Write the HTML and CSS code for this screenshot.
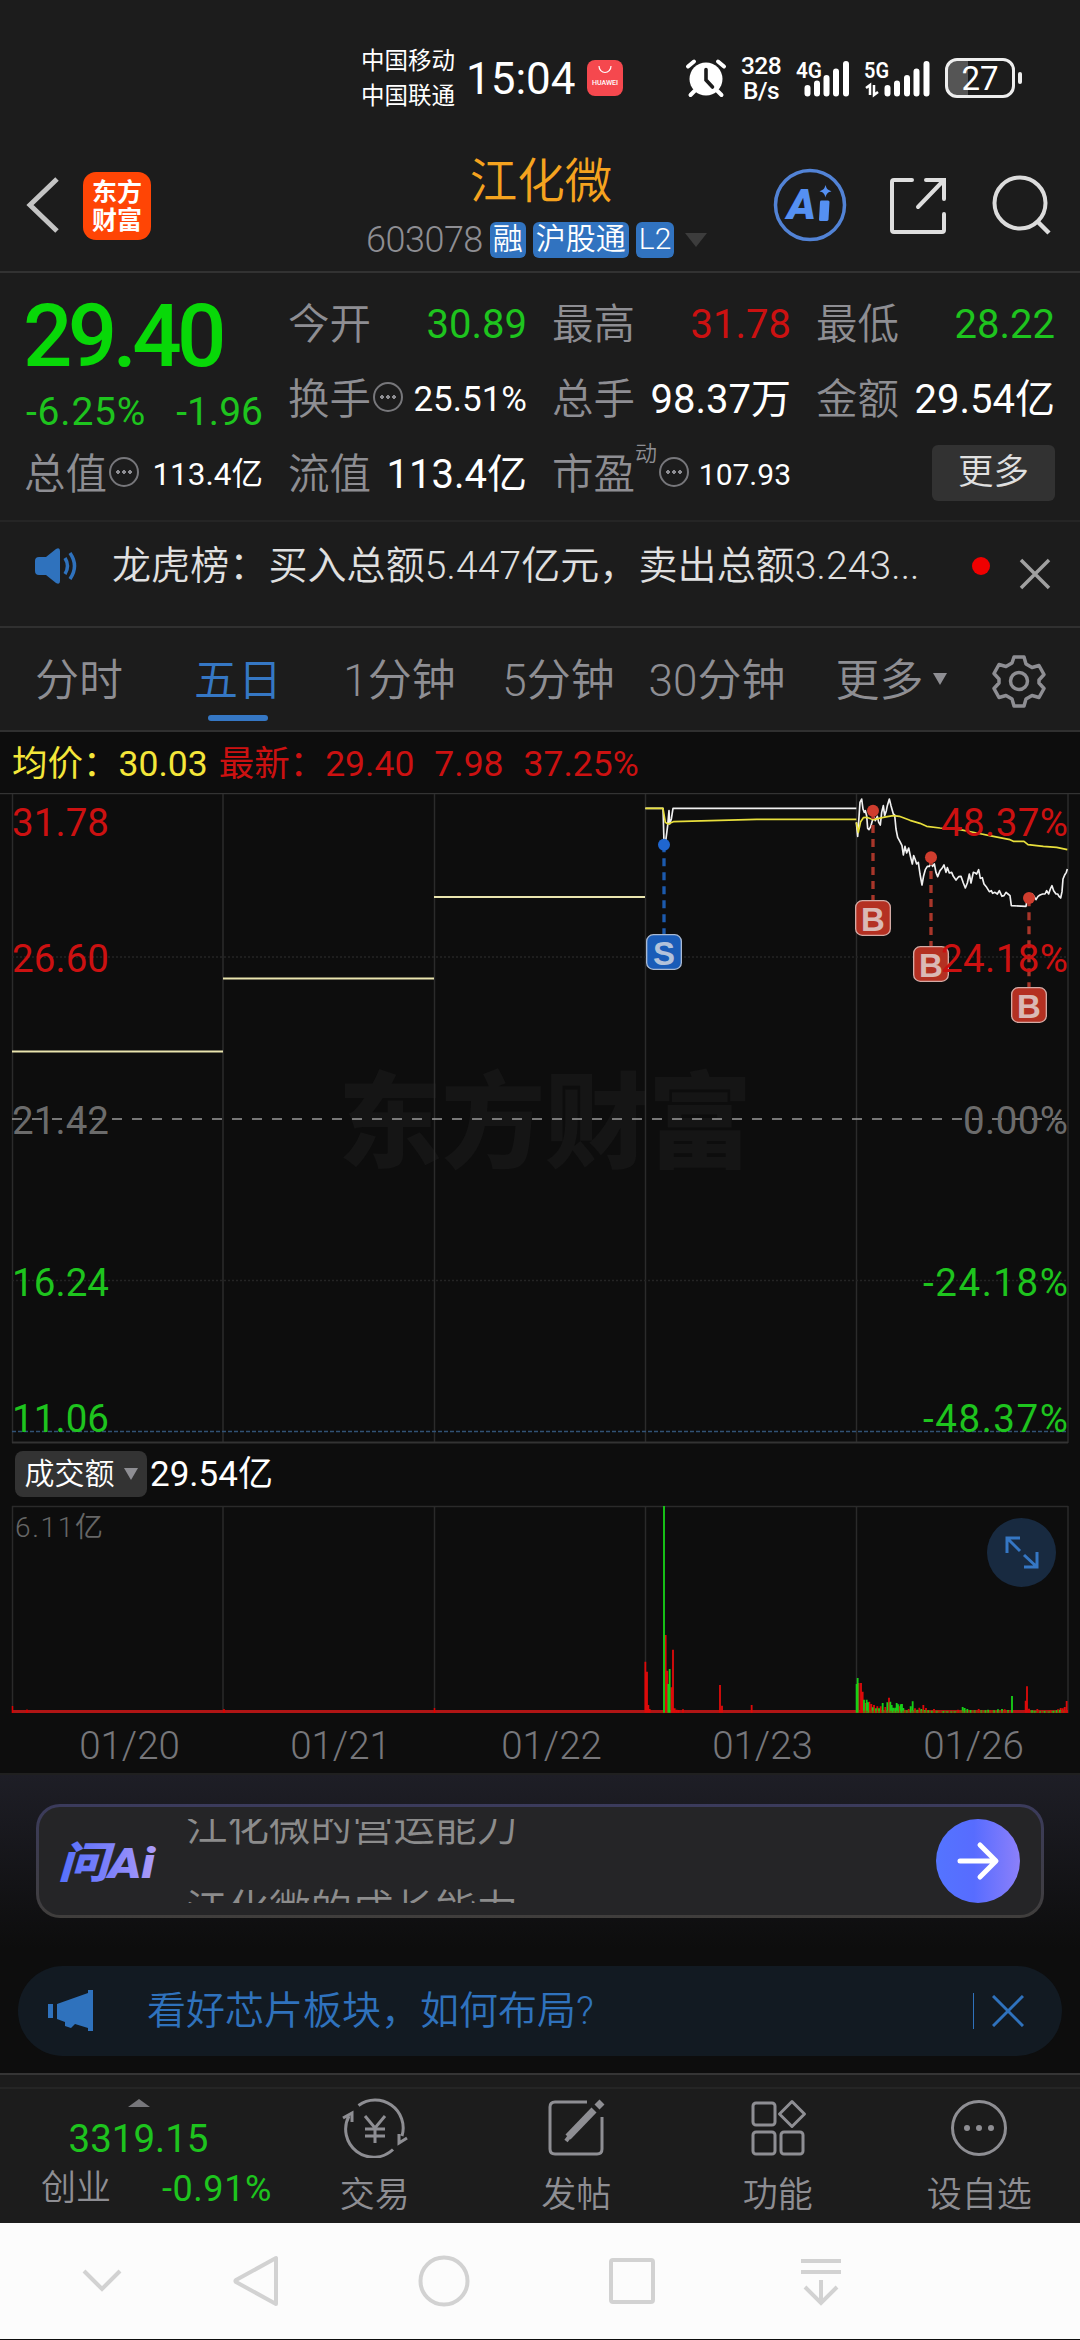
FILE: index.html
```html
<!DOCTYPE html>
<html lang="zh-CN">
<head>
<meta charset="utf-8">
<title>江化微 603078</title>
<link rel="stylesheet" href="styles.css">
</head>
<body>
<div class="status">
  <div class="carriers"><span>中国移动</span><span>中国联通</span></div>
  <div class="clock">15:04</div>
  <div class="huawei"><svg width="16" height="9" viewBox="0 0 16 9"><path d="M2 0a6 6.5 0 0 0 12 0" fill="none" stroke="#fff" stroke-width="1.2"/></svg><span>HUAWEI</span></div>
  <svg class="alarm" width="42" height="40" viewBox="0 0 42 40"><circle cx="21" cy="21" r="16.5" fill="#fff"/><path d="M3 8.500l6-5M39 8.500l-6-5M9.500 33l-4 4M32.500 33l4 4" stroke="#fff" stroke-width="4" stroke-linecap="round"/><path d="M21 11.500v10.500l6.500 7" fill="none" stroke="#1c1c1c" stroke-width="3.600" stroke-linecap="round"/></svg>
  <div class="speed"><span>328</span><span>B/s</span></div>
  <svg class="signal" width="60" height="40" viewBox="0 0 60 40"><text x="0" y="19" class="net" textLength="26" lengthAdjust="spacingAndGlyphs">4G</text><path d="M11.500 29v5.500M21 24.500v10M30.500 19v15.500M40 12.500v22M50 5v29.500" stroke="#fff" stroke-width="6" stroke-linecap="round"/></svg>
  <svg class="signal2" width="72" height="40" viewBox="0 0 72 40"><text x="0" y="19" class="net" textLength="25" lengthAdjust="spacingAndGlyphs">5G</text><path d="M2 29l4-3v10M10 26v10l4-3" fill="none" stroke="#fff" stroke-width="2.500"/><path d="M23.500 29v5.500M33 24.500v10M43 19v15.500M52.500 12.500v22M62.500 5v29.500" stroke="#fff" stroke-width="6" stroke-linecap="round"/></svg>
  <div class="battery"><span>27</span></div><i class="nub"></i>
</div>

<header class="top">
  <svg class="back" width="34" height="56" viewBox="0 0 34 56"><path d="M31 2L4 28l27 26" fill="none" stroke="#c4c4c4" stroke-width="5"/></svg>
  <div class="brand"><span>东方</span><span>财富</span></div>
  <div class="title">
    <h1>江化微</h1>
    <div class="code"><span class="num">603078</span><b>融</b><b>沪股通</b><b>L2</b><svg width="22" height="14" viewBox="0 0 22 14"><path d="M0 0h22L11 14z" fill="#3c3c3c"/></svg></div>
  </div>
  <svg class="ai" width="74" height="74" viewBox="0 0 74 74"><circle cx="37" cy="37" r="34.500" fill="none" stroke="#5283d6" stroke-width="3.500"/><text x="14" y="50.500" class="ai-a" textLength="29" lengthAdjust="spacingAndGlyphs">A</text><path d="M48.500 34h6.500l-1 17.500h-6.500z" fill="#5590f2" stroke="#5590f2" stroke-width="3" stroke-linejoin="round"/><path d="M52.500 17c1 4 2.500 5.200 6 6.200-3.500 1-5 2.200-6 6.200-1-4-2.500-5.200-6-6.200 3.500-1 5-2.200 6-6.200z" fill="#5590f2"/></svg>
  <svg class="share" width="60" height="60" viewBox="0 0 60 60"><path d="M24 4H6q-2 0-2 2v48q0 2 2 2h48q2 0 2-2V38M38 4h18v19M55 5L30 31" fill="none" stroke="#dedede" stroke-width="4" stroke-linecap="round"/></svg>
  <svg class="search" width="62" height="62" viewBox="0 0 62 62"><circle cx="29" cy="29" r="25.500" fill="none" stroke="#dcdcdc" stroke-width="4"/><path d="M47 48l11 11" stroke="#dcdcdc" stroke-width="4.500"/></svg>
</header>

<section class="quote">
  <div class="price"><div class="last">29.40</div><div class="change"><span>-6.25%</span><span>-1.96</span></div></div>
  <div class="cell"><span>今开</span><em class="green">30.89</em></div>
  <div class="cell"><span>最高</span><em class="red">31.78</em></div>
  <div class="cell"><span>最低</span><em class="green">28.22</em></div>
  <div class="cell"><span>换手</span><i class="info"></i><em class="mid">25.51%</em></div>
  <div class="cell"><span>总手</span><em>98.37万</em></div>
  <div class="cell"><span>金额</span><em>29.54亿</em></div>
  <div class="cell"><span>总值</span><i class="info"></i><em class="small">113.4亿</em></div>
  <div class="cell"><span>流值</span><em>113.4亿</em></div>
  <div class="cell"><span>市盈</span><sup>动</sup><i class="info"></i><em class="small2">107.93</em></div>
  <div class="cell end"><button>更多</button></div>
</section>

<section class="news">
  <svg width="46" height="38" viewBox="0 0 46 38"><path d="M2 14q0-4 4-4h7L23 2q4-2 4 2v30q0 4-4 2L13 28H6q-4 0-4-4z" fill="#2f72bd"/><path d="M32 11q5 8 0 16M37 6q9 13 0 26" fill="none" stroke="#2f72bd" stroke-width="3.500"/></svg>
  <p>龙虎榜：买入总额5.447亿元，卖出总额3.243...</p>
  <i class="dot"></i>
  <svg class="close" width="32" height="32" viewBox="0 0 32 32"><path d="M2 2l28 28M30 2L2 30" stroke="#a0a0a0" stroke-width="3.500"/></svg>
</section>

<nav class="tabs">
  <span>分时</span><span class="on">五日</span><span>1分钟</span><span>5分钟</span><span>30分钟</span><span>更多<i class="tri"></i></span>
  <svg width="54" height="54" viewBox="0 0 54 54"><path d="M22 3h10l2 7 6 3.500 7-2 5 9-5 5.500v3l5 5.500-5 9-7-2-6 3.500-2 7H22l-2-7-6-3.500-7 2-5-9L7 29v-4l-5-5.500 5-9 7 2 6-3.500z" fill="none" stroke="#8e8e93" stroke-width="3.500" stroke-linejoin="round"/><circle cx="27" cy="27" r="8.500" fill="none" stroke="#8e8e93" stroke-width="3.500"/></svg>
</nav>

<section class="legend"><span class="yellow">均价：30.03</span><span class="red">最新：29.40</span><span class="red">7.98</span><span class="red">37.25%</span></section>

<svg class="chart" width="1080" height="652" viewBox="0 794 1080 652">
  <text x="338" y="1161" class="mark" textLength="414">东方财富</text>
  <path d="M0 794.500H1080" stroke="#333" stroke-width="1.500"/>
  <path d="M12.500 795V1444M223 795V1444M434.500 795V1444M645.500 795V1444M856.500 795V1444M1068 795V1444" stroke="#2b2b2b" stroke-width="1.500"/>
  <path d="M12 1443.500H1068" stroke="#333" stroke-width="2"/>
  <path d="M12 958H1068M12 1281.500H1068" stroke="#242424" stroke-width="1.500" stroke-dasharray="2 2"/>
  <path d="M12 1120H1068" stroke="#9a9a9a" stroke-width="1.600" stroke-dasharray="10 10"/>
  <path d="M12 1432.500H1068" stroke="#315274" stroke-width="1.500" stroke-dasharray="4 2"/>
  <path d="M12 1052.500H223M223 979.500H434M434 898H645" stroke="#e9e4ae" stroke-width="2"/>
  <g transform="translate(600 780) scale(.33333)" fill="none" stroke-linejoin="round">
    <path d="M136 88H189L192 190 196 195 203 140 207 95 209 135 214 120 219 88H769M769 130 773 172 780 70 785 60 789 90 793 100 796 95 800 110 803 148 807 152 812 143 817 125 822 115 826 125 832 112 836 130 841 138 845 100 850 80 854 110 859 95 862 80 868 60 873 80 880 105 884 108 888 150 893 175 900 188 906 200 910 228 915 202 920 222 926 207 932 235 937 255 941 230 945 240 950 255 955 250 960 285 966 318 971 290 976 272 982 262 988 262 993 250 998 262 1003 255 1008 280 1013 293 1020 275 1026 268 1032 258 1038 280 1042 266 1048 282 1055 280 1060 292 1068 303 1076 293 1083 292 1090 312 1096 327 1102 312 1108 285 1113 312 1120 280 1126 282 1130 285 1136 272 1141 298 1147 296 1152 315 1160 325 1168 338 1174 335 1178 343 1185 340 1192 345 1198 335 1206 352 1212 350 1218 340 1224 345 1230 350 1234 380 1278 382 1282 358 1290 350 1296 345 1302 352 1308 362 1314 352 1320 348 1328 345 1335 345 1340 335 1346 345 1351 330 1356 320 1361 335 1368 345 1373 345 1377 352 1382 357 1386 338 1389 300 1394 288 1399 280 1402 270" stroke="#f0f0f0" stroke-width="5"/>
    <path d="M136 88H189L196 130 204 135 220 128 360 124 470 121H769M769 130 775 160 782 128 790 116 800 115 820 122 850 115 862 113 880 110 898 112 930 124 960 133 980 142 1020 147 1080 152 1130 162 1180 172 1230 182 1240 187 1272 187 1284 197 1330 202 1370 205 1402 212" stroke="#e8df3c" stroke-width="5"/>
    <path d="M192 196V466" stroke="#1c5aad" stroke-width="10" stroke-dasharray="24 18"/>
    <path d="M819 96V365M993 234V502M1287 358V626" stroke="#a8362a" stroke-width="10" stroke-dasharray="24 18"/>
    <circle cx="192" cy="197" r="18" fill="#1f66d0"/>
    <g fill="#cf3d2e"><circle cx="819" cy="95" r="18"/><circle cx="993" cy="235" r="18"/><circle cx="1287" cy="357" r="18"/></g>
    <rect x="140" y="467" width="104" height="104" rx="20" fill="#1a5cb8" stroke="#a9b9d2" stroke-width="4"/>
    <g fill="#b43022" stroke="#d3aaa5" stroke-width="4"><rect x="767" y="365" width="104" height="104" rx="20"/><rect x="941" y="503" width="104" height="104" rx="20"/><rect x="1235" y="626" width="104" height="104" rx="20"/></g>
  </g>
  <g class="flag"><text x="664" y="965.500" fill="#b3c2da">S</text><text x="873" y="931.500">B</text><text x="931" y="977.500">B</text><text x="1029" y="1018.500">B</text></g>
  <g class="axis">
    <g fill="#cc1111"><text x="12" y="837" textLength="97">31.78</text><text x="12" y="973" textLength="97">26.60</text></g>
    <text x="12" y="1135" fill="#6b6b6b" textLength="97">21.42</text>
    <g fill="#1ec41e"><text x="12" y="1297" textLength="97">16.24</text><text x="12" y="1433" textLength="97">11.06</text></g>
    <g text-anchor="end"><g fill="#cc1111"><text x="1068" y="837" textLength="127">48.37%</text><text x="1068" y="973" textLength="127">24.18%</text></g>
    <text x="1068" y="1135" fill="#6b6b6b" textLength="105">0.00%</text>
    <g fill="#1ec41e"><text x="1068" y="1297" textLength="145">-24.18%</text><text x="1068" y="1433" textLength="145">-48.37%</text></g></g>
  </g>
</svg>

<section class="volbar"><button>成交额<i class="tri"></i></button><span>29.54亿</span></section>

<div class="volume">
<svg width="1080" height="210" viewBox="0 1506 1080 210">
  <path d="M12 1507.500H1068M12.500 1507V1714M223 1507V1714M434.500 1507V1714M645.500 1507V1714M856.500 1507V1714M1068 1507V1714" fill="none" stroke="#2a2a2a" stroke-width="1.500"/>
  <text x="15" y="1538" class="peak" textLength="88">6.11亿</text>
  <path d="M12 1712.500H1068" stroke="#b01515" stroke-width="3"/>
  <path d="M12.500 1714V1707M27 1714V1710.500M224 1714V1710M434.500 1714V1709" stroke="#e00000" stroke-width="1.500"/>
  <g transform="translate(600 1500) scale(.33333)" stroke-width="5.500" fill="none">
    <path stroke="#dc0a0a" d="M136 641V488M141 641V518M145 641V618M149 641V630M197 641V408M202 641V515M219 641V452M214 641V565M224 641V628M230 641V632M236 641V633M249 641V631M360 641V558M366 641V620M455 641V618M776 641V552M783 641V552M788 641V578M796 641V612M808 641V608M814 641V615M822 641V618M832 641V622M842 641V622M856 641V624M867 641V596M882 641V630M898 641V622M914 641V632M926 641V630M945 641V628M958 641V626M970 641V618M978 641V627M988 641V633M1002 641V630M1016 641V634M1074 641V632M1136 641V630M1170 641V633M1214 641V631M1277 641V605M1281 641V562M1287 641V629M1312 641V630M1350 641V634M1374 641V631M1382 641V627M1388 641V628M1394 641V624M1400 641V606"/>
    <path stroke="#17cf17" d="M192 641V21M205 641V555M209 641V510M770 641V555M773 641V537M792 641V602M800 641V602M804 641V610M818 641V625M828 641V628M837 641V628M848 641V612M862 641V610M871 641V608M875 641V618M880 641V626M886 641V626M890 641V612M894 641V616M902 641V616M906 641V615M910 641V627M920 641V634M932 641V622M938 641V607M952 641V632M964 641V630M974 641V633M984 641V634M996 641V635M1010 641V635M1030 641V636M1042 641V636M1054 641V636M1064 641V636M1088 641V624M1094 641V627M1102 641V630M1112 641V633M1124 641V634M1144 641V634M1156 641V634M1164 641V632M1182 641V634M1194 641V631M1206 641V630M1224 641V633M1236 641V591M1296 641V634M1304 641V635M1320 641V636M1334 641V636M1346 641V636M1360 641V635M1370 641V634M1380 641V632"/>
    <path stroke="#7c5a0e" stroke-dasharray="4 5" d="M790 638H1230M1290 638H1398"/>
  </g>
</svg>
<div class="expand"><svg width="36" height="36" viewBox="0 0 36 36"><path d="M16 3H3v15M3 3l13 13M20 32h13V17M33 32L20 20" fill="none" stroke="#3577c4" stroke-width="3"/></svg></div>
</div>

<div class="dates"><span>01/20</span><span>01/21</span><span>01/22</span><span>01/23</span><span>01/26</span></div>

<section class="promo">
  <div class="ask">
    <svg class="wen" width="100" height="48" viewBox="0 0 100 48"><defs><linearGradient id="g" x1="0" x2="1"><stop offset="0" stop-color="#5470fb"/><stop offset=".5" stop-color="#7b80fb"/><stop offset="1" stop-color="#ad9cf8"/></linearGradient></defs><text x="-1" y="41" class="logo" fill="url(#g)" textLength="97" lengthAdjust="spacingAndGlyphs">问Ai</text></svg>
    <div class="ticker"><div><span>江化微的营运能力</span><span>江化微的成长能力</span></div></div>
    <div class="go"><svg width="44" height="40" viewBox="0 0 44 40"><path d="M4 20h35M24 4l16 16-16 16" fill="none" stroke="#fff" stroke-width="5" stroke-linecap="round" stroke-linejoin="round"/></svg></div>
  </div>
  <div class="banner">
    <svg width="46" height="42" viewBox="0 0 46 42"><path d="M0 14h5v14H0zM9 14L40 3V0h5v41h-5v-3l-13-4-4 4-6-2v-4l-8-3z" fill="#2f72bd"/></svg>
    <p>看好芯片板块，如何布局?</p>
    <i></i>
    <svg width="32" height="32" viewBox="0 0 32 32"><path d="M1 1l30 30M31 1L1 31" stroke="#2f72bd" stroke-width="3"/></svg>
  </div>
</section>

<footer class="bottom">
  <div class="index"><svg width="22" height="8" viewBox="0 0 22 8"><path d="M0 8L11 0l11 8z" fill="#77777b"/></svg><b>3319.15</b><div><span>创业</span><em>-0.91%</em></div></div>
  <div class="act"><svg width="70" height="60" viewBox="0 0 70 60" fill="none" stroke="#8e8e93" stroke-width="3"><path d="M18.500 7.500A28 28 0 0 1 62 38M53 51.500A28 28 0 0 1 9 18M3 20l9-5v9M67 40l-8 5v-9M25 18l10 12 10-12M35 30v15M25 31h20M25 38h20"/></svg><span>交易</span></div>
  <div class="act"><svg width="60" height="60" viewBox="0 0 60 60" fill="none" stroke="#8e8e93" stroke-width="3"><path d="M41 4H9Q4 4 4 9v42q0 5 5 5h42q5 0 5-5V19"/><path d="M48 12L22 39" stroke-width="7"/><path d="M26 35l-6 8" stroke-width="4"/><path d="M51 9l5-5" stroke-width="7"/></svg><span>发帖</span></div>
  <div class="act"><svg width="60" height="60" viewBox="0 0 60 60" fill="none" stroke="#8e8e93" stroke-width="3"><rect x="5" y="5" width="22" height="22" rx="3"/><rect x="5" y="34" width="22" height="22" rx="3"/><rect x="33" y="34" width="22" height="22" rx="3"/><path d="M44 3.500L56.500 16 44 28.500 31.500 16z" stroke-linejoin="round"/></svg><span>功能</span></div>
  <div class="act"><svg width="60" height="60" viewBox="0 0 60 60"><circle cx="30" cy="30" r="26.500" fill="none" stroke="#8e8e93" stroke-width="3"/><g fill="#8e8e93"><circle cx="18" cy="30" r="3"/><circle cx="30" cy="30" r="3"/><circle cx="42" cy="30" r="3"/></g></svg><span>设自选</span></div>
</footer>

<div class="sysnav">
  <svg width="40" height="24" viewBox="0 0 40 24"><path d="M2 2l18 18L38 2"/></svg>
  <svg width="48" height="54" viewBox="0 0 48 54"><path d="M44 4v46L4 28q-1-1 0-2z" stroke-linejoin="round"/></svg>
  <svg width="54" height="54" viewBox="0 0 54 54"><circle cx="27" cy="27" r="23.500"/></svg>
  <svg width="50" height="50" viewBox="0 0 50 50"><rect x="4" y="4" width="42" height="42" rx="2"/></svg>
  <svg width="44" height="50" viewBox="0 0 44 50"><path d="M2 5h40M2 16h40M22 24v22M6 31l16 16 16-16"/></svg>
</div>
</body>
</html>
```
FILE: styles.css
```css
* { box-sizing: border-box; }
body { margin: 0; width: 1080px; height: 2340px; overflow: hidden; background: #0d0d0d; color: #fff; font-family: Roboto, "Noto Sans CJK SC", sans-serif; font-weight: 350; line-height: 1; display: flex; flex-direction: column; }
body > * { flex: none; }
svg { display: block; flex: none; }
text { font-family: Roboto, "Noto Sans CJK SC", sans-serif; }
h1, p { margin: 0; font-weight: 350; }
em, i { font-style: normal; }
em { font-weight: 400; }
button { border: 0; padding: 0; font: inherit; color: inherit; }
.green { color: #1ec41e; }
.red { color: #cc1111; }
.yellow { color: #f4e63a; }

.status { height: 140px; background: #1c1c1c; display: flex; padding: 0 0 0 361px; }
.carriers { display: flex; flex-direction: column; font-size: 23.5px; gap: 11px; width: 105px; padding-top: 50px; font-weight: 400; }
.clock { font-size: 44px; width: 121px; padding-top: 57px; font-weight: 400; }
.huawei { width: 36px; height: 36px; margin-top: 60px; border-radius: 8px; background: #f5484e; display: flex; flex-direction: column; align-items: center; padding-top: 6px; gap: 5px; font-size: 7px; font-weight: 500; }
.alarm { margin: 58px 0 0 62px; }
.speed { display: flex; flex-direction: column; align-items: center; width: 40px; margin: 54px 0 0 14px; font-size: 24.5px; font-weight: 500; letter-spacing: -.6px; }
.signal { margin: 59px 0 0 15px; }
.signal2 { margin: 59px 0 0 8px; }
.net { font-size: 22px; font-weight: 600; fill: #fff; }
.battery { width: 70px; height: 40px; margin: 58px 0 0 9px; border: 3px solid #eee; border-radius: 12px; background: linear-gradient(90deg, #555 31%, transparent 31%); text-align: center; font-size: 33px; line-height: 35px; font-weight: 400; }
.nub { width: 4px; height: 12px; margin: 72px 0 0 3px; border-radius: 2px; background: #eee; }

.top { height: 133px; background: #1c1c1c; border-bottom: 2px solid #323232; display: flex; align-items: flex-start; padding-left: 26px; }
.back { margin-top: 37px; }
.brand { width: 68px; height: 68px; margin: 32px 0 0 23px; border-radius: 13px; background: #ff4505; display: flex; flex-direction: column; align-items: center; justify-content: center; gap: 3px; font-size: 25px; font-weight: 700; }
.title { width: 390px; margin-left: 195px; text-align: center; }
.title h1 { font-size: 47.5px; color: #f5a31f; padding-top: 19px; }
.code { display: flex; gap: 7px; align-items: center; margin-top: 15px; padding-left: 20px; height: 36px; }
.code .num { font-size: 36px; color: #8e8e93; letter-spacing: -.5px; }
.code b { font-weight: 350; font-size: 30px; background: #3173c0; height: 36px; line-height: 34px; border-radius: 6px; padding: 0 3px; }
.code svg { margin-left: 4px; }
.ai { margin: 28px 0 0 37px; }
.ai-a { font-size: 42px; font-weight: 900; font-style: italic; fill: #5590f2; }
.share { margin: 36px 0 0 41px; }
.search { margin: 34px 0 0 43px; }

.quote { height: 249px; background: #1c1c1c; padding: 14px 25px 0 26px; display: grid; grid-template-columns: repeat(4, 237px); grid-template-rows: repeat(3, 75px); column-gap: 27px; border-bottom: 2px solid #252525; }
.price { grid-row: span 2; display: flex; flex-direction: column; color: #08d808; }
.last { font-size: 87px; font-weight: 500; letter-spacing: -4.6px; padding-top: 6px; margin-left: -3px; height: 106px; }
.change { display: flex; justify-content: space-between; font-size: 39px; color: #1ec41e; font-weight: 400; }
.change span:first-child { letter-spacing: .8px; }
.cell { display: flex; align-items: center; color: #8e8e93; font-size: 40px; }
.cell > span { font-size: 41.5px; margin-left: -2px; }
.cell em { margin-left: auto; color: #fff; }
.cell em.green { color: #1ec41e; }
.cell em.red { color: #cc1111; }
.cell em.mid { font-size: 35px; }
.cell em.small { font-size: 31.5px; }
.cell em.small2 { font-size: 30px; }
.cell sup { font-size: 22px; line-height: 22px; align-self: flex-start; margin-top: 6px; }
.info { width: 30px; height: 30px; border: 2px solid #77777b; border-radius: 50%; margin-left: 2px; background: radial-gradient(circle 2px at 7px 13px, #8e8e93 90%, transparent), radial-gradient(circle 2px at 13px 13px, #8e8e93 90%, transparent), radial-gradient(circle 2px at 19px 13px, #8e8e93 90%, transparent); margin-top: -5px; }
.cell button { width: 123px; height: 56px; border-radius: 6px; background: #323232; color: #e0e0e0; font-size: 35.5px; margin: -4px 0 0 auto; }

.news { height: 106px; background: #1c1c1c; border-bottom: 2px solid #303030; display: flex; align-items: flex-start; padding-left: 33px; }
.news svg { margin-top: 25px; }
.news p { font-size: 39px; color: #e0e0e0; margin-left: 33px; width: 820px; padding-top: 25px; white-space: nowrap; letter-spacing: .1px; }
.dot { width: 18px; height: 18px; border-radius: 50%; background: #f00000; margin: 35px 0 0 40px; }
.news .close { margin: 36px 0 0 29px; }

.tabs { height: 104px; background: #1c1c1c; border-bottom: 2px solid #303030; display: grid; grid-template-columns: 158px 160px 163px 155px 162px 194px 54px; padding-top: 26px; color: #8e8e93; font-size: 44px; }
.tabs span { display: flex; flex-direction: column; align-items: center; height: 70px; padding-top: 5px; }
.tabs span:last-of-type { flex-direction: row; justify-content: center; align-items: flex-start; gap: 9px; padding-right: 8px; }
.tabs .on { color: #3577c4; }
.tabs .on::after { content: ""; width: 60px; height: 6px; border-radius: 3px; background: #3577c4; margin-top: 12px; }
.tri { display: inline-block; border: 7px solid transparent; border-top: 12px solid #8e8e93; border-bottom: 0; }
.tabs .tri { margin-top: 14px; }

.legend { height: 61px; padding: 15px 0 0 12px; font-size: 35.5px; display: flex; font-weight: 400; }
.legend span { margin-right: 20px; }
.legend span:first-child { margin-right: 11px; }

.mark { font-size: 104px; font-weight: 900; fill: #151515; }
.axis { font-size: 38.5px; font-weight: 400; }
.flag { font-size: 33px; font-weight: 700; fill: #dab9b5; text-anchor: middle; }
.flag text { font-family: "Liberation Sans", sans-serif; }

.volbar { height: 60px; padding: 6px 0 0 15px; display: flex; font-size: 35px; align-items: flex-start; }
.volbar button { width: 132px; height: 46px; background: #333; border-radius: 8px; font-size: 30px; display: flex; align-items: center; justify-content: center; gap: 9px; }
.volbar > span { margin: 6px 0 0 3px; font-weight: 400; }
.volume { height: 210px; position: relative; }
.peak { font-size: 28px; fill: #666; }
.expand { position: absolute; left: 987px; top: 13px; width: 69px; height: 69px; border-radius: 50%; background: #182a40; display: grid; place-items: center; }
.dates { height: 60px; padding: 12px 0 0 24px; display: grid; grid-template-columns: repeat(5, 211px); text-align: center; font-size: 38.5px; color: #77777b; border-bottom: 2px solid #202020; }

.promo { height: 298px; background: linear-gradient(#1e1e26, #0d0d0d 58%); padding-top: 29px; }
.ask { width: 1008px; height: 114px; margin-left: 36px; border: 3px solid transparent; border-radius: 24px; background: linear-gradient(#252527, #252527) padding-box, linear-gradient(#3b3b5c, #403e3c) border-box; display: flex; align-items: center; padding-left: 20px; }
.wen { overflow: visible; }
.logo { font-size: 43px; font-weight: 900; font-style: italic; }
.ticker { height: 84px; width: 700px; margin-left: 27px; overflow: hidden; color: #8c8c8c; font-size: 41.5px; line-height: 84px; }
.ticker div { display: flex; flex-direction: column; margin-top: -34px; }
.go { width: 84px; height: 84px; margin-left: 50px; border-radius: 50%; background: linear-gradient(90deg, #5474ff, #576cff 45%, #8c80fa); display: grid; place-items: center; }
.banner { width: 1044px; height: 90px; margin: 48px 0 0 18px; border-radius: 45px; background: #121a22; display: flex; align-items: center; padding-left: 30px; color: #2f72bd; }
.banner p { font-size: 39px; margin-left: 53px; width: 826px; }
.banner i { width: 1px; height: 36px; background: #2f72bd; margin-right: 18px; }

.bottom { height: 150px; background: #1c1c1c; border-top: 2px solid #353535; display: grid; grid-template-columns: 274px repeat(4, 201.5px); color: #8e8e93; font-size: 35px; }
.bottom > div { border-top: 2px solid #252525; margin-top: 12px; }
.index { display: flex; flex-direction: column; align-items: center; padding: 10px 0 0 3px; }
.index b { font-weight: 400; font-size: 38.5px; color: #1ec41e; margin-top: 13px; }
.index div { display: flex; align-self: stretch; justify-content: space-between; margin: 12px 2px 0 38px; }
.index em { font-size: 36px; color: #1ec41e; letter-spacing: .6px; }
.act { display: flex; flex-direction: column; align-items: center; padding-top: 9px; gap: 20px; }

.sysnav { height: 116px; background: #fcfcfc; display: flex; align-items: flex-start; }
.sysnav svg { fill: none; stroke: #d2d2d2; stroke-width: 4; }
.sysnav svg:nth-child(1) { margin: 46px 0 0 82px; }
.sysnav svg:nth-child(2) { margin: 31px 0 0 110px; }
.sysnav svg:nth-child(3) { margin: 31px 0 0 137px; }
.sysnav svg:nth-child(4) { margin: 33px 0 0 136px; }
.sysnav svg:nth-child(5) { margin: 33px 0 0 142px; }
```
